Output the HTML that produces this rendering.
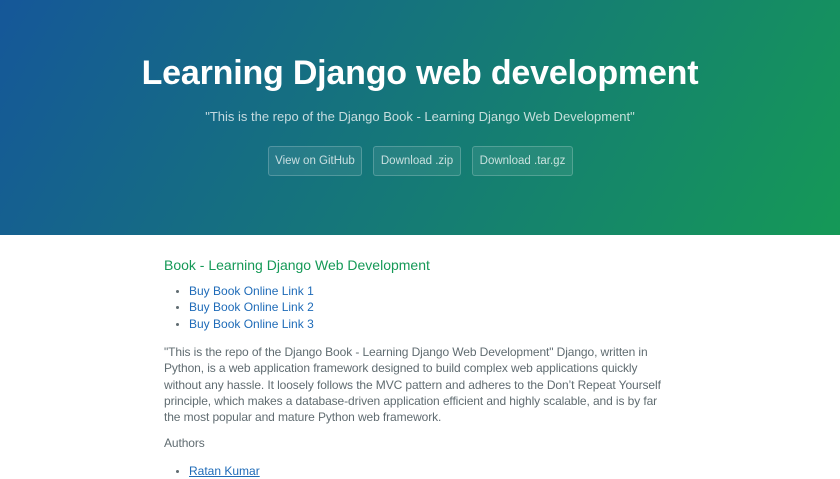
<!DOCTYPE html>
<html><head><meta charset="utf-8"><style>
html,body{margin:0;padding:0;background:#fff;width:840px;height:472px;overflow:hidden;font-family:"Liberation Sans",sans-serif;color:#606c71}
.hdr{height:235px;background:linear-gradient(120deg,#155799,#159957);color:#fff;text-align:center;position:relative}
h1{margin:0;position:absolute;top:54px;left:0;right:0;font-size:34px;font-weight:bold;letter-spacing:-0.2px}
.tag{position:absolute;top:109px;left:0;right:0;font-size:13px;color:rgba(255,255,255,.75)}
.btn{position:absolute;top:146px;height:28px;line-height:28px;border:1px solid rgba(255,255,255,.2);background:rgba(255,255,255,.08);border-radius:3px;font-size:11.5px;color:rgba(255,255,255,.75);text-align:center}
.c{position:absolute;left:164px;top:235px;width:520px}
h2{margin:0;position:absolute;top:22px;font-size:14px;font-weight:normal;color:#159957;white-space:nowrap}
ul{margin:0;padding:0;list-style:none;position:absolute;left:0}
li{font-size:12px;line-height:16.3px;color:#1e6bb8;white-space:nowrap;position:relative;padding-left:25px}
li:before{content:"";position:absolute;left:12px;top:7px;width:3px;height:3px;border-radius:2px;background:#606c71}
p{margin:0;position:absolute;font-size:12px;line-height:16.3px;white-space:nowrap;letter-spacing:-0.1px}
</style></head><body>
<div class="hdr">
<h1>Learning Django web development</h1>
<div class="tag">"This is the repo of the Django Book - Learning Django Web Development"</div>
<div class="btn" style="left:268px;width:92px">View on GitHub</div>
<div class="btn" style="left:373px;width:86px">Download .zip</div>
<div class="btn" style="left:472px;width:99px">Download .tar.gz</div>
</div>
<div class="c">
<h2>Book - Learning Django Web Development</h2>
<ul style="top:48px"><li>Buy Book Online Link 1</li><li>Buy Book Online Link 2</li><li>Buy Book Online Link 3</li></ul>
<p style="top:109px">"This is the repo of the Django Book - Learning Django Web Development" Django, written in<br>Python, is a web application framework designed to build complex web applications quickly<br>without any hassle. It loosely follows the MVC pattern and adheres to the Don’t Repeat Yourself<br>principle, which makes a database-driven application efficient and highly scalable, and is by far<br>the most popular and mature Python web framework.</p>
<p style="top:200px">Authors</p>
<ul style="top:228px"><li style="text-decoration:underline">Ratan Kumar</li></ul>
</div>
</body></html>
